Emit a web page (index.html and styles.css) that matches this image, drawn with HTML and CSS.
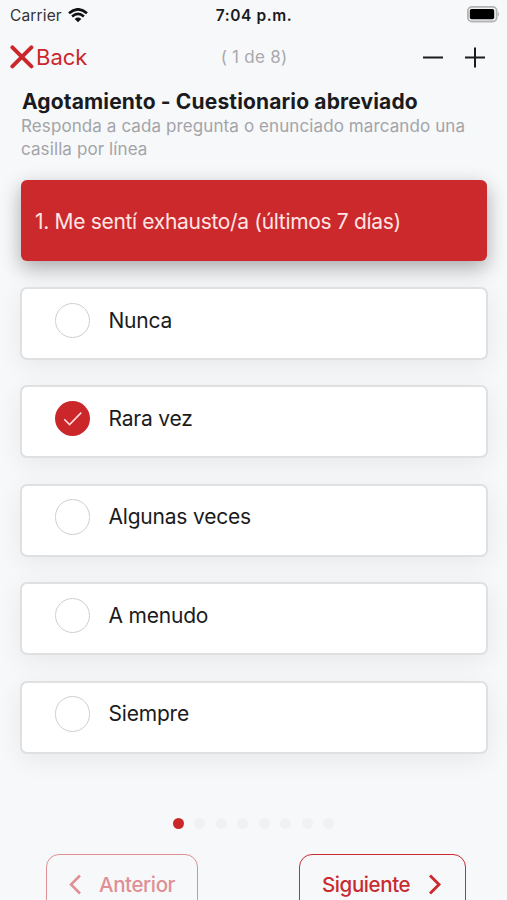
FILE: index.html
```html
<!DOCTYPE html>
<html lang="es">
<head>
<meta charset="utf-8">
<title>Cuestionario abreviado</title>
<link rel="stylesheet" href="styles.css">
</head>
<body>
<header class="status">
  <div class="carrier"><span class="carrier-name">Carrier</span>
    <svg class="wifi" width="20" height="15" viewBox="0 0 20 15" fill="none" stroke="#111" stroke-width="2.6"><path d="M1 5.2Q10-2.6 19 5.2M4.1 8.5Q10 3.3 15.9 8.5"/><path d="M6.7 10.9Q10 8.2 13.3 10.9L10 14.2Z" fill="#111" stroke="none"/></svg>
  </div>
  <span class="time">7:04 p.m.</span>
  <svg class="battery" width="34" height="17" viewBox="0 0 34 17"><rect x=".9" y=".9" width="28.8" height="14.6" rx="4" fill="#f3f3f4" stroke="#b3b4b6" stroke-width="1.8"/><rect x="2.8" y="3" width="24.4" height="10.3" rx="1.8"/><path d="M31.2 6q1.9 2.2 0 4.4z" fill="#aaa"/></svg>
</header>
<nav class="nav">
  <div class="back"><svg width="24" height="24" viewBox="0 0 24 24" stroke="#cb272b" stroke-width="3.9" stroke-linecap="round"><path d="M2.4 2.4 21.4 21.4M21.4 2.4 2.4 21.4"/></svg><span class="back-label">Back</span></div>
  <span class="progress">( 1 de 8)</span>
  <div class="zoom">
    <svg width="22" height="22" viewBox="0 0 22 22" stroke="#1b1b1d" stroke-width="2"><path d="M1 11.5H21"/></svg>
    <svg width="22" height="22" viewBox="0 0 22 22" stroke="#1b1b1d" stroke-width="2"><path d="M1 11.5H21M11 1.5V21.5"/></svg>
  </div>
</nav>
<main class="content">
  <h1 class="title"><span class="title-text">Agotamiento - Cuestionario abreviado</span></h1>
  <p class="intro"><span class="intro-a">Responda a cada pregunta o enunciado marcando una</span><br><span class="intro-b">casilla por línea</span></p>
  <h2 class="question"><span class="question-text">1. Me sentí exhausto/a (últimos 7 días)</span></h2>
  <div class="options">
    <div class="option"><i class="radio"></i><span class="label">Nunca</span></div>
    <div class="option"><i class="radio checked"><svg width="35" height="35" viewBox="0 0 36 36" fill="none" stroke="#ffdcdc" stroke-width="1.6"><path d="M9.5 18.8 15 24.3 27 12"/></svg></i><span class="label">Rara vez</span></div>
    <div class="option"><i class="radio"></i><span class="label">Algunas veces</span></div>
    <div class="option"><i class="radio"></i><span class="label">A menudo</span></div>
    <div class="option"><i class="radio"></i><span class="label">Siempre</span></div>
  </div>
</main>
<div class="dots"><i class="dot active"></i><i class="dot"></i><i class="dot"></i><i class="dot"></i><i class="dot"></i><i class="dot"></i><i class="dot"></i><i class="dot"></i></div>
<footer class="pager">
  <div class="button prev"><svg width="14" height="22" viewBox="0 0 14 22" fill="none" stroke="currentColor" stroke-width="2.5"><path d="M12 1.5 3 10.5 12 19.5"/></svg><span class="prev-label">Anterior</span></div>
  <div class="button next"><span class="next-label">Siguiente</span><svg width="14" height="22" viewBox="0 0 14 22" fill="none" stroke="currentColor" stroke-width="2.9"><path d="M2 1.5 11 10.5 2 19.5"/></svg></div>
</footer>
</body>
</html>
```
FILE: styles.css
```css
* { box-sizing: border-box; }
body {
  margin: 0;
  height: 900px;
  overflow: hidden;
  background: #f7f8fa;
  color: #1b1b1d;
  font-family: Inter, "Liberation Sans", sans-serif;
}
svg { display: block; flex: none; }
span { white-space: nowrap; }
.status {
  display: grid;
  grid-template-columns: 1fr auto 1fr;
  align-items: center;
  height: 30px;
  padding: 0 9px 0 10px;
}
.carrier { display: flex; align-items: center; gap: 6px; font-size: 15.5px; letter-spacing: .15px; }
.carrier-name { color: #333335; }
.time { font-size: 15.5px; font-weight: 600; letter-spacing: .6px; }
.battery { justify-self: end; margin: 0 -3px 1px 0; }
.nav {
  display: grid;
  grid-template-columns: 1fr auto 1fr;
  align-items: center;
  height: 54px;
  padding: 0 21px 0 22px;
}
.back { display: flex; align-items: center; gap: 2px; margin-left: -12px; color: #cb272b; font-size: 22px; }
.progress { color: #a9a9ac; font-size: 17px; letter-spacing: .25px; }
.zoom { display: flex; justify-content: flex-end; gap: 20px; }
.content { padding: 0 19.5px 0 20.5px; }
.title { margin: 4px 0 0 1.5px; font-size: 21px; line-height: 27px; font-weight: 650; letter-spacing: .14px; }
.intro { margin: 0 0 0 .5px; font-size: 17px; line-height: 23px; color: #a3a4a8; letter-spacing: .1px; }
.question {
  display: flex;
  align-items: center;
  height: 81px;
  margin: 19px .5px 0 .5px;
  padding: 2px 14px 0;
  border-radius: 6px;
  background: #cb292c;
  color: #ffe5e3;
  font-size: 21px;
  font-weight: 400;
  letter-spacing: -.32px;
  box-shadow: 0 7px 20px rgba(0, 0, 0, .32);
}
.options { display: grid; gap: 25.4px; margin: 26px -.5px 0; }
.option {
  display: flex;
  align-items: flex-start;
  gap: 18.5px;
  height: 73px;
  padding: 13.5px 0 0 32.5px;
  border: 2.5px solid #dfe0e1;
  border-radius: 7px;
  background: #fff;
  font-size: 21px;
  letter-spacing: -.2px;
  box-shadow: 0 6px 26px rgba(0, 0, 0, .065);
}
.radio { flex: none; width: 35.5px; height: 35.5px; border: 1.5px solid #cecfd0; border-radius: 50%; }
.checked { border: 0; background: #cb272b; }
.label { line-height: 36px; }
.dots { display: flex; justify-content: center; gap: 10.5px; margin-top: 64px; }
.dot { width: 11px; height: 11px; border-radius: 50%; background: #f0f1f3; }
.dot.active { background: #cb272b; }
.pager { display: flex; justify-content: space-between; margin-top: 25px; padding: 0 41px 0 46px; }
.button {
  display: flex;
  align-items: center;
  height: 62px;
  border: 1.5px solid;
  border-radius: 13px;
  font-size: 20.5px;
  font-weight: 500;
  letter-spacing: -.4px;
}
.prev { width: 152px; gap: 17px; padding-left: 21px; color: #df9094; }
.next { width: 167px; padding: 0 23px 0 22px; justify-content: space-between; color: #c92b30; }
```
